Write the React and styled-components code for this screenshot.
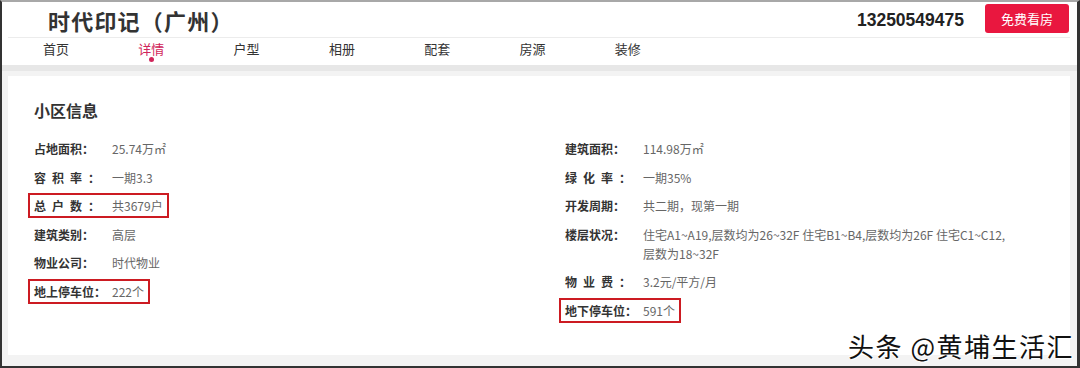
import React from "react";
import styled, { createGlobalStyle } from "styled-components";

const GlobalStyle = createGlobalStyle`
  html, body { margin: 0; padding: 0; background: #fff; }
  * { box-sizing: border-box; }
  body { font-family: "Noto Sans CJK SC", "Noto Sans", sans-serif; }
`;

const Frame = styled.div`
  position: relative;
  width: 1080px;
  height: 368px;
  border-top: 2px solid #a8a8a8;
  border-left: 2px solid #333;
  border-right: 3px solid #333;
  border-bottom: 2px solid #333;
  display: flex;
  flex-direction: column;
  overflow: hidden;
`;

const Header = styled.header`
  background: #fff;
  padding: 0 7px 0 6px;
`;

const TopBar = styled.div`
  height: 36px;
  display: flex;
  align-items: center;
  border-bottom: 1px solid #ececec;
  padding-left: 40px;
  padding-right: 1px;
`;

const Title = styled.h1`
  margin: 0;
  font-size: 22px;
  font-weight: 700;
  color: #333;
  line-height: 26px;
  flex: 1;
  letter-spacing: 1.2px;
`;

const Phone = styled.div`
  font-family: "Liberation Sans", Arial, sans-serif;
  font-weight: 700;
  font-size: 17.5px;
  color: #222;
  margin-right: 21px;
  margin-top: 1px;
`;

const CtaButton = styled.button`
  flex: none;
  width: 84px;
  height: 29px;
  border: none;
  border-radius: 3px;
  background: #e9173f;
  color: #fff;
  font-family: "Noto Sans CJK SC", sans-serif;
  font-size: 13px;
  padding: 0;
  margin-bottom: 2px;
`;

const Nav = styled.nav`
  height: 27px;
  display: flex;
  gap: 69px;
  padding-left: 35px;
`;

const NavItem = styled.a`
  position: relative;
  width: 26.3px;
  font-size: 13px;
  line-height: 22px;
  color: ${(p) => (p.$active ? "#d0255a" : "#333")};
  white-space: nowrap;
  text-decoration: none;
  &::after {
    content: "";
    display: ${(p) => (p.$active ? "block" : "none")};
    position: absolute;
    left: 11px;
    top: 19px;
    width: 5px;
    height: 5px;
    border-radius: 50%;
    background: #d0255a;
  }
`;

const Main = styled.main`
  flex: 1;
  background: #f3f3f3;
  border-top: 6px solid #e7e7e7;
  padding: 5px 7px 11px 6px;
  display: flex;
`;

const Card = styled.section`
  flex: 1;
  background: #fff;
  padding: 25px 0 0 26px;
`;

const SectionTitle = styled.h2`
  margin: 0 0 17px;
  font-size: 16px;
  line-height: 18px;
  font-weight: 700;
  color: #333;
`;

const Grid = styled.div`
  display: grid;
  grid-template-columns: 531px 1fr;
`;

const Column = styled.div`
  display: flex;
  flex-direction: column;
  gap: 3.5px;
  align-items: flex-start;
`;

const Row = styled.div`
  display: flex;
  align-items: flex-start;
  padding: 1px 4px;
  margin-left: -6px;
  border: 2px solid ${(p) => (p.$marked ? "#cc1b22" : "transparent")};
  font-size: 12px;
  line-height: 19px;
`;

const Label = styled.span`
  flex: none;
  width: 78px;
  font-weight: 700;
  color: #333;
  white-space: nowrap;
  letter-spacing: ${(p) => (p.$spread ? "6px" : "0")};
`;

const Colon = styled.span`
  letter-spacing: 0;
`;

const Value = styled.span`
  color: #666;
  max-width: ${(p) => (p.$wide ? "372px" : "none")};
  white-space: ${(p) => (p.$wide ? "normal" : "nowrap")};
`;

const Watermark = styled.div`
  position: absolute;
  right: 3px;
  bottom: 5px;
  font-size: 26px;
  line-height: 30px;
  color: #111;
  letter-spacing: 1.5px;
  text-shadow: 0 0 2px #fff, 0 0 2px #fff, 1px 1px 1px #fff, -1px -1px 1px #fff;
`;

const navItems = ["首页", "详情", "户型", "相册", "配套", "房源", "装修"];

const leftRows = [
  { label: "占地面积：", value: "25.74万㎡" },
  { label: "容积率：", value: "一期3.3", spread: true },
  { label: "总户数：", value: "共3679户", spread: true, marked: true },
  { label: "建筑类别：", value: "高层" },
  { label: "物业公司：", value: "时代物业" },
  { label: "地上停车位：", value: "222个", marked: true },
];

const rightRows = [
  { label: "建筑面积：", value: "114.98万㎡" },
  { label: "绿化率：", value: "一期35%", spread: true },
  { label: "开发周期：", value: "共二期，现第一期" },
  {
    label: "楼层状况：",
    value: "住宅A1~A19,层数均为26~32F 住宅B1~B4,层数均为26F 住宅C1~C12,层数为18~32F",
    wide: true,
  },
  { label: "物业费：", value: "3.2元/平方/月", spread: true },
  { label: "地下停车位：", value: "591个", marked: true },
];

function renderLabel(text, spread) {
  if (!spread) return text;
  return (
    <>
      {text.replace("：", "")}
      <Colon>：</Colon>
    </>
  );
}

function InfoColumn({ rows }) {
  return (
    <Column>
      {rows.map((r) => (
        <Row key={r.label} $marked={r.marked}>
          <Label $spread={r.spread}>{renderLabel(r.label, r.spread)}</Label>
          <Value $wide={r.wide}>{r.value}</Value>
        </Row>
      ))}
    </Column>
  );
}

export default function App() {
  return (
    <>
      <GlobalStyle />
      <Frame>
        <Header>
          <TopBar>
            <Title>时代印记（广州）</Title>
            <Phone>13250549475</Phone>
            <CtaButton>免费看房</CtaButton>
          </TopBar>
          <Nav>
            {navItems.map((n) => (
              <NavItem key={n} $active={n === "详情"}>
                {n}
              </NavItem>
            ))}
          </Nav>
        </Header>
        <Main>
          <Card>
            <SectionTitle>小区信息</SectionTitle>
            <Grid>
              <InfoColumn rows={leftRows} />
              <InfoColumn rows={rightRows} />
            </Grid>
          </Card>
        </Main>
        <Watermark>头条 @黄埔生活汇</Watermark>
      </Frame>
    </>
  );
}
